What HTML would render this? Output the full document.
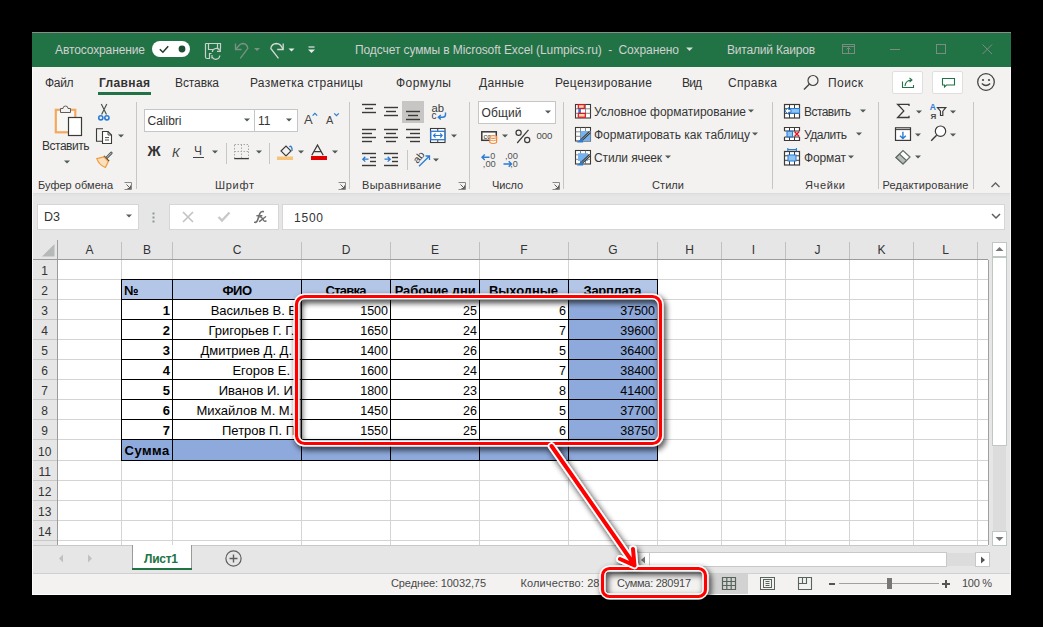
<!DOCTYPE html><html><head><meta charset="utf-8"><style>
html,body{margin:0;padding:0;background:#000;width:1043px;height:627px;overflow:hidden;position:relative;font-family:"Liberation Sans",sans-serif}
svg{display:block}
</style></head><body>
<div style="position:absolute;left:32px;top:32px;width:979px;height:563px;background:#f3f2f1;"></div>
<div style="position:absolute;left:32px;top:32px;width:979px;height:1px;background:#8c8c8c;"></div>
<div style="position:absolute;left:32px;top:33px;width:979px;height:34px;background:#217346;"></div>
<div style="position:absolute;top:43.84px;font-size:12px;line-height:12px;color:#d2d0d0;white-space:nowrap;letter-spacing:-0.114px;left:55.00px;">Автосохранение</div>
<div style="position:absolute;left:152px;top:41px;width:38px;height:16px;border-radius:8px;background:#fff"></div>
<svg style="position:absolute;left:0;top:0" width="1043" height="627" viewBox="0 0 1043 627"><path d="M159.8 49.3 L162.9 52.2 L168.2 46.3" stroke="#1d3b2a" stroke-width="1.5" fill="none"/><circle cx="182" cy="49" r="3.4" fill="#1d4f33"/></svg>
<svg style="position:absolute;left:0;top:0" width="1043" height="627" viewBox="0 0 1043 627"><g stroke="#c9d1cc" stroke-width="1.2" fill="none"><path d="M205.5 43.5 H220.5 V48.5"/><path d="M205.5 43.5 V57 Q205.5 58.5 207 58.5 H210"/><path d="M208.5 43.5 V49.5 H213.5"/><path d="M217.5 43.5 V48.5"/><path d="M209.5 58.5 V53.5 H211.5"/><path d="M212.3 52 A4 4 0 0 1 219.8 50.5"/><path d="M220.3 48 V51.3 H217"/><path d="M219.8 55.5 A4 4 0 0 1 212.2 57"/><path d="M212 55 V58.5"/></g><g stroke="#7d9283" stroke-width="1.3" fill="none"><path d="M235.5 43.5 V49.5 H241.5"/><path d="M235.7 49.2 L239.5 45 Q241 43.5 243 43.5 Q247 43.7 247.8 48.3 L240.3 58.3"/></g><path d="M254 48 H260 L257 51Z" fill="#7d9283"/><g stroke="#d5d9d6" stroke-width="1.3" fill="none"><path d="M283.2 43.5 V49.5 H277.2"/><path d="M283 49.2 Q280.5 43.5 276.5 43.5 Q271.5 43.7 270.8 48.5 L278.5 58.3"/></g><path d="M288.5 48.5 H294.5 L291.5 51.5Z" fill="#e8ebe9"/><path d="M308.5 47 H314.5" stroke="#e8ebe9" stroke-width="1.2"/><path d="M308 49.5 H315 L311.5 53Z" fill="#e8ebe9"/></svg>
<div style="position:absolute;top:43.84px;font-size:12px;line-height:12px;color:#d2d0d0;white-space:nowrap;letter-spacing:-0.091px;left:355.00px;">Подсчет суммы в Microsoft Excel (Lumpics.ru)  -  Сохранено</div>
<svg style="position:absolute;left:686px;top:47px;" width="7" height="5" viewBox="0 0 7 5"><path d="M0 0.5 H7 L3.5 4Z" fill="#d3dcd6"/></svg>
<div style="position:absolute;top:43.84px;font-size:12px;line-height:12px;color:#d2d0d0;white-space:nowrap;letter-spacing:-0.198px;left:727.00px;">Виталий Каиров</div>
<svg style="position:absolute;left:0;top:0" width="1043" height="627" viewBox="0 0 1043 627"><g stroke="#7b8d80" stroke-width="1" fill="none"><rect x="842.5" y="44.5" width="12" height="9"/><path d="M842.5 46.5 H854.5 M848.5 48 V53.5 M846.5 49.5 L848.5 47.5 L850.5 49.5"/><path d="M890 49.5 H900"/><rect x="936.5" y="44.5" width="9" height="9"/><path d="M982.5 44.5 L992 54 M992 44.5 L982.5 54"/></g></svg>
<div style="position:absolute;top:76.84px;font-size:12px;line-height:12px;color:#303030;white-space:nowrap;letter-spacing:-0.334px;left:45.00px;">Файл</div>
<div style="position:absolute;top:76.84px;font-size:12px;line-height:12px;color:#333;white-space:nowrap;font-weight:bold;letter-spacing:0.366px;left:99.00px;">Главная</div>
<div style="position:absolute;left:98px;top:92px;width:53px;height:3px;background:#217346;"></div>
<div style="position:absolute;top:76.84px;font-size:12px;line-height:12px;color:#303030;white-space:nowrap;letter-spacing:-0.101px;left:175.00px;">Вставка</div>
<div style="position:absolute;top:76.84px;font-size:12px;line-height:12px;color:#303030;white-space:nowrap;letter-spacing:0.258px;left:250.00px;">Разметка страницы</div>
<div style="position:absolute;top:76.84px;font-size:12px;line-height:12px;color:#303030;white-space:nowrap;letter-spacing:0.463px;left:396.00px;">Формулы</div>
<div style="position:absolute;top:76.84px;font-size:12px;line-height:12px;color:#303030;white-space:nowrap;letter-spacing:0.329px;left:479.00px;">Данные</div>
<div style="position:absolute;top:76.84px;font-size:12px;line-height:12px;color:#303030;white-space:nowrap;letter-spacing:0.333px;left:555.00px;">Рецензирование</div>
<div style="position:absolute;top:76.84px;font-size:12px;line-height:12px;color:#303030;white-space:nowrap;letter-spacing:-0.855px;left:682.00px;">Вид</div>
<div style="position:absolute;top:76.84px;font-size:12px;line-height:12px;color:#303030;white-space:nowrap;letter-spacing:0.321px;left:728.00px;">Справка</div>
<svg style="position:absolute;left:802px;top:74px;" width="18" height="18" viewBox="0 0 18 18"><circle cx="11" cy="6.5" r="5" stroke="#444" stroke-width="1.2" fill="none"/><path d="M7.5 10 L2 15.5" stroke="#444" stroke-width="1.4"/></svg>
<div style="position:absolute;top:76.84px;font-size:12px;line-height:12px;color:#303030;white-space:nowrap;letter-spacing:0.437px;left:828.00px;">Поиск</div>
<div style="position:absolute;left:892px;top:71px;width:31px;height:23px;background:#fff;border:1px solid #e1dfdd;box-sizing:border-box;border-radius:2px"></div>
<svg style="position:absolute;left:0;top:0" width="1043" height="627" viewBox="0 0 1043 627"><path d="M902.5 81.5 V87.5 H913.5 V85" stroke="#217346" stroke-width="1.1" fill="none"/><path d="M905 86 Q905.5 80.5 911.5 80 M909.5 77.8 L912 80 L909.5 82.2" stroke="#217346" stroke-width="1.1" fill="none"/></svg>
<div style="position:absolute;left:932px;top:71px;width:31px;height:23px;background:#fff;border:1px solid #e1dfdd;box-sizing:border-box;border-radius:2px"></div>
<svg style="position:absolute;left:0;top:0" width="1043" height="627" viewBox="0 0 1043 627"><path d="M942.5 78.5 H954.5 V85 H946.5 L944.5 87 V85 H942.5Z" stroke="#217346" stroke-width="1.1" fill="none"/></svg>
<svg style="position:absolute;left:976px;top:72px;" width="20" height="20" viewBox="0 0 20 20"><circle cx="10" cy="10" r="8.3" stroke="#444" stroke-width="1.3" fill="none"/><circle cx="7" cy="8" r="1.1" fill="#444"/><circle cx="13" cy="8" r="1.1" fill="#444"/><path d="M5.8 11.5 Q10 15.5 14.2 11.5" stroke="#444" stroke-width="1.2" fill="none"/></svg>
<div style="position:absolute;left:32px;top:193px;width:979px;height:1px;background:#dcdcdc;"></div>
<div style="position:absolute;left:32px;top:194px;width:979px;height:2px;background:#e3e3e3;"></div>
<svg style="position:absolute;left:52px;top:103px;" width="34" height="34" viewBox="0 0 34 34"><rect x="3.8" y="6.8" width="19.5" height="22.5" fill="#f9f7f5" stroke="#f4a85e" stroke-width="2.2"/><path d="M8.5 9.5 V5.5 H11 a2.5 2.5 0 0 1 5 0 H18.5 V9.5Z" fill="#f3f2f1" stroke="#605e5c" stroke-width="1"/><rect x="16.5" y="14.5" width="13" height="18" fill="#fff" stroke="#3b3a39" stroke-width="1.2"/></svg>
<div style="position:absolute;top:139.84px;font-size:12px;line-height:12px;color:#363636;white-space:nowrap;letter-spacing:-0.481px;left:42.00px;">Вставить</div>
<svg style="position:absolute;left:63.5px;top:159.5px;" width="6" height="4" viewBox="0 0 6 4"><path d="M0 0.5 H6 L3 3.5Z" fill="#4f5b54"/></svg>
<svg style="position:absolute;left:0;top:0" width="1043" height="627" viewBox="0 0 1043 627"><path d="M101.3 104 L106.5 114.5 M106.8 104 L101.6 114.5" stroke="#4b5650" stroke-width="1.2" fill="none"/><circle cx="100.8" cy="117.8" r="2.1" stroke="#2b7cd3" stroke-width="1.6" fill="none"/><circle cx="106.9" cy="117.8" r="2.1" stroke="#2b7cd3" stroke-width="1.6" fill="none"/><path d="M103 128.8 H96.5 V141.3 H102" stroke="#3b3a39" stroke-width="1.1" fill="none"/><path d="M102.5 131.5 H108 L111.5 135 V143.5 H102.5Z" stroke="#3b3a39" stroke-width="1.1" fill="#fff"/><path d="M108 131.5 V135 H111.5" stroke="#3b3a39" stroke-width="0.9" fill="none"/><path d="M105 137.6 H109 M105 140 H109" stroke="#3b3a39" stroke-width="0.9"/><path d="M111.3 153 L106.8 157.6" stroke="#4b5650" stroke-width="2.6" stroke-linecap="round"/><path d="M111.3 153 L106.8 157.6" stroke="#f3f2f1" stroke-width="0.8" stroke-linecap="round"/><path d="M103.8 156 L109 161.2" stroke="#3b3a39" stroke-width="1.6"/><path d="M96.8 158.6 L104 156.8 L108.3 161.5 L105.4 167.5 Q99 165 96.8 158.6Z" fill="#fbe0bd" stroke="#f09a3c" stroke-width="1.2"/></svg>
<svg style="position:absolute;left:117.5px;top:134px;" width="6" height="4" viewBox="0 0 6 4"><path d="M0 0.5 H6 L3 3.5Z" fill="#4f5b54"/></svg>
<div style="position:absolute;top:179.69px;font-size:11px;line-height:11px;color:#363636;white-space:nowrap;letter-spacing:0.023px;left:38.00px;">Буфер обмена</div>
<svg style="position:absolute;left:124px;top:182px;" width="8" height="8" viewBox="0 0 8 8"><path d="M0.5 0.5 H7.5 V7.5 H0.5" stroke="#8a8886" fill="none"/><path d="M2.5 2.5 L6.5 6.5 M6.5 3.5 V6.5 H3.5" stroke="#605e5c" fill="none"/></svg>
<div style="position:absolute;left:136px;top:102px;width:1px;height:87px;background:#c8c6c4;"></div>
<div style="position:absolute;left:144px;top:109px;width:111px;height:23px;background:#fff;border:1px solid #c6c6c6;box-sizing:border-box"></div>
<div style="position:absolute;left:254px;top:109px;width:44px;height:23px;background:#fff;border:1px solid #c6c6c6;box-sizing:border-box"></div>
<div style="position:absolute;top:114.84px;font-size:12px;line-height:12px;color:#333;white-space:nowrap;letter-spacing:-0.002px;left:147.50px;">Calibri</div>
<svg style="position:absolute;left:244px;top:118px;" width="6" height="4" viewBox="0 0 6 4"><path d="M0 0.5 H6 L3 3.5Z" fill="#4f5b54"/></svg>
<div style="position:absolute;top:114.84px;font-size:12px;line-height:12px;color:#333;white-space:nowrap;left:258.00px;">11</div>
<svg style="position:absolute;left:286px;top:118px;" width="6" height="4" viewBox="0 0 6 4"><path d="M0 0.5 H6 L3 3.5Z" fill="#4f5b54"/></svg>
<div style="position:absolute;top:113.00px;font-size:13px;line-height:13px;color:#444;white-space:nowrap;left:304.00px;">A</div>
<svg style="position:absolute;left:0;top:0" width="1043" height="627" viewBox="0 0 1043 627"><path d="M312.6 115.6 L314.9 113.3 L317.2 115.6" stroke="#2b7cd3" stroke-width="1.2" fill="none"/></svg>
<div style="position:absolute;top:114.69px;font-size:11px;line-height:11px;color:#444;white-space:nowrap;left:326.00px;">A</div>
<svg style="position:absolute;left:0;top:0" width="1043" height="627" viewBox="0 0 1043 627"><path d="M334.2 113.3 L336.5 115.6 L338.8 113.3" stroke="#2b7cd3" stroke-width="1.2" fill="none"/></svg>
<div style="position:absolute;top:144.03px;font-size:14.5px;line-height:14.5px;color:#333;white-space:nowrap;font-weight:bold;left:147.50px;">Ж</div>
<div style="position:absolute;top:146.00px;font-size:13px;line-height:13px;color:#444;white-space:nowrap;left:172.00px;font-style:italic;">К</div>
<div style="position:absolute;top:144.84px;font-size:12px;line-height:12px;color:#444;white-space:nowrap;left:194.00px;">Ч</div>
<div style="position:absolute;left:193px;top:157px;width:11px;height:1px;background:#444;"></div>
<svg style="position:absolute;left:212px;top:150px;" width="6" height="4" viewBox="0 0 6 4"><path d="M0 0.5 H6 L3 3.5Z" fill="#4f5b54"/></svg>
<div style="position:absolute;left:226px;top:143px;width:1px;height:21px;background:#c8c6c4;"></div>
<svg style="position:absolute;left:0;top:0" width="1043" height="627" viewBox="0 0 1043 627"><g stroke="#a8a8a8" stroke-width="1" stroke-dasharray="1.5 1.5" fill="none"><rect x="234.5" y="144.5" width="14" height="14"/><path d="M241.5 144.5 V158.5 M234.5 151.5 H248.5"/></g><path d="M234.3 158.6 H248.8" stroke="#3b3a39" stroke-width="1.3"/></svg>
<svg style="position:absolute;left:255.5px;top:150px;" width="6" height="4" viewBox="0 0 6 4"><path d="M0 0.5 H6 L3 3.5Z" fill="#4f5b54"/></svg>
<div style="position:absolute;left:269px;top:143px;width:1px;height:21px;background:#c8c6c4;"></div>
<svg style="position:absolute;left:277px;top:143px;" width="17" height="18" viewBox="0 0 17 18"><path d="M4 8 L9 3 L14 8 L9 13Z" stroke="#3b3a39" stroke-width="1.1" fill="none"/><path d="M12.5 4 Q14 2 15 5.5 V8" stroke="#2b7cd3" stroke-width="1.3" fill="none"/><rect x="0" y="13.5" width="16" height="3.5" fill="#f7c27a"/></svg>
<svg style="position:absolute;left:298px;top:150px;" width="6" height="4" viewBox="0 0 6 4"><path d="M0 0.5 H6 L3 3.5Z" fill="#4f5b54"/></svg>
<svg style="position:absolute;left:0;top:0" width="1043" height="627" viewBox="0 0 1043 627"><path d="M311.8 155.2 L317.5 145 L323.2 155.2 M313.8 151.6 H321.2" stroke="#3b3a39" stroke-width="1.3" fill="none"/></svg>
<div style="position:absolute;left:311px;top:156px;width:16px;height:4px;background:#e00000;"></div>
<svg style="position:absolute;left:332px;top:150px;" width="6" height="4" viewBox="0 0 6 4"><path d="M0 0.5 H6 L3 3.5Z" fill="#4f5b54"/></svg>
<div style="position:absolute;top:179.69px;font-size:11px;line-height:11px;color:#363636;white-space:nowrap;letter-spacing:0.702px;left:215.00px;">Шрифт</div>
<svg style="position:absolute;left:338px;top:182px;" width="8" height="8" viewBox="0 0 8 8"><path d="M0.5 0.5 H7.5 V7.5 H0.5" stroke="#8a8886" fill="none"/><path d="M2.5 2.5 L6.5 6.5 M6.5 3.5 V6.5 H3.5" stroke="#605e5c" fill="none"/></svg>
<div style="position:absolute;left:349px;top:102px;width:1px;height:87px;background:#c8c6c4;"></div>
<div style="position:absolute;left:402px;top:101px;width:22px;height:22px;background:#c8c6c4;"></div>
<svg style="position:absolute;left:0;top:0" width="1043" height="627" viewBox="0 0 1043 627"><rect x="362" y="103.8" width="14" height="1.4" fill="#3b3a39"/><rect x="365" y="107.8" width="8" height="1.4" fill="#3b3a39"/><rect x="362" y="111.8" width="14" height="1.4" fill="#3b3a39"/><rect x="384" y="106.8" width="14" height="1.4" fill="#3b3a39"/><rect x="386" y="110.8" width="10" height="1.4" fill="#3b3a39"/><rect x="384" y="114.8" width="14" height="1.4" fill="#3b3a39"/><rect x="406" y="110.8" width="14" height="1.4" fill="#3b3a39"/><rect x="408" y="114.8" width="10" height="1.4" fill="#3b3a39"/><rect x="406" y="118.8" width="14" height="1.4" fill="#3b3a39"/><rect x="362" y="128.8" width="14" height="1.4" fill="#3b3a39"/><rect x="362" y="132.8" width="10" height="1.4" fill="#3b3a39"/><rect x="362" y="136.8" width="14" height="1.4" fill="#3b3a39"/><rect x="362" y="140.8" width="10" height="1.4" fill="#3b3a39"/><rect x="384" y="128.8" width="14" height="1.4" fill="#3b3a39"/><rect x="386" y="132.8" width="10" height="1.4" fill="#3b3a39"/><rect x="384" y="136.8" width="14" height="1.4" fill="#3b3a39"/><rect x="386" y="140.8" width="10" height="1.4" fill="#3b3a39"/><rect x="406" y="128.8" width="14" height="1.4" fill="#3b3a39"/><rect x="410" y="132.8" width="10" height="1.4" fill="#3b3a39"/><rect x="406" y="136.8" width="14" height="1.4" fill="#3b3a39"/><rect x="410" y="140.8" width="10" height="1.4" fill="#3b3a39"/></svg>
<svg style="position:absolute;left:0;top:0" width="1043" height="627" viewBox="0 0 1043 627"><text x="431.6" y="111.8" font-size="10" fill="#3b3a39" font-family="Liberation Sans" textLength="12.5" lengthAdjust="spacingAndGlyphs">ab</text><text x="431.6" y="119.4" font-size="10" fill="#3b3a39" font-family="Liberation Sans">c</text><path d="M445.5 112.5 V114.5 Q445.5 117.3 442.5 117.3 H438.5 M440.8 115 L438.3 117.3 L440.8 119.6" stroke="#2b7cd3" stroke-width="1.4" fill="none"/></svg>
<svg style="position:absolute;left:0;top:0" width="1043" height="627" viewBox="0 0 1043 627"><rect x="430.5" y="128.5" width="14.5" height="14" stroke="#3b3a39" stroke-width="1.1" fill="#fff"/><path d="M437.75 128.5 V131.5 M437.75 139.5 V142.5" stroke="#3b3a39" stroke-width="1"/><rect x="430.8" y="131.3" width="14" height="8.4" stroke="#2b7cd3" stroke-width="1.3" fill="#fff"/><path d="M433.5 135.5 H442.2 M435.5 133.5 L433.5 135.5 L435.5 137.5 M440.2 133.5 L442.2 135.5 L440.2 137.5" stroke="#2b7cd3" stroke-width="1.1" fill="none"/></svg>
<svg style="position:absolute;left:451px;top:134px;" width="6" height="4" viewBox="0 0 6 4"><path d="M0 0.5 H6 L3 3.5Z" fill="#4f5b54"/></svg>
<svg style="position:absolute;left:0;top:0" width="1043" height="627" viewBox="0 0 1043 627"><rect x="362" y="152.8" width="14" height="1.4" fill="#3b3a39"/><rect x="370" y="156.8" width="6" height="1.4" fill="#3b3a39"/><rect x="370" y="160.8" width="6" height="1.4" fill="#3b3a39"/><rect x="362" y="164.8" width="14" height="1.4" fill="#3b3a39"/><rect x="384" y="152.8" width="14" height="1.4" fill="#3b3a39"/><rect x="392" y="156.8" width="6" height="1.4" fill="#3b3a39"/><rect x="392" y="160.8" width="6" height="1.4" fill="#3b3a39"/><rect x="384" y="164.8" width="14" height="1.4" fill="#3b3a39"/><path d="M368.5 159.2 H362.8 M365.3 156.8 L362.8 159.2 L365.3 161.6" stroke="#2b7cd3" stroke-width="1.3" fill="none"/><path d="M384.5 159.2 H390.2 M387.7 156.8 L390.2 159.2 L387.7 161.6" stroke="#2b7cd3" stroke-width="1.3" fill="none"/></svg>
<div style="position:absolute;left:407px;top:150px;width:1px;height:20px;background:#c8c6c4;"></div>
<svg style="position:absolute;left:0;top:0" width="1043" height="627" viewBox="0 0 1043 627"><text x="0" y="0" font-size="10" fill="#3b3a39" font-family="Liberation Sans" transform="translate(417.5 164) rotate(-50)" textLength="12" lengthAdjust="spacingAndGlyphs">ab</text><path d="M419 166.3 L429.5 156 M425.5 156 H429.5 V160" stroke="#2b7cd3" stroke-width="1.3" fill="none"/></svg>
<svg style="position:absolute;left:433px;top:158px;" width="6" height="4" viewBox="0 0 6 4"><path d="M0 0.5 H6 L3 3.5Z" fill="#4f5b54"/></svg>
<div style="position:absolute;top:179.69px;font-size:11px;line-height:11px;color:#363636;white-space:nowrap;letter-spacing:0.298px;left:362.00px;">Выравнивание</div>
<svg style="position:absolute;left:458px;top:182px;" width="8" height="8" viewBox="0 0 8 8"><path d="M0.5 0.5 H7.5 V7.5 H0.5" stroke="#8a8886" fill="none"/><path d="M2.5 2.5 L6.5 6.5 M6.5 3.5 V6.5 H3.5" stroke="#605e5c" fill="none"/></svg>
<div style="position:absolute;left:469px;top:102px;width:1px;height:87px;background:#c8c6c4;"></div>
<div style="position:absolute;left:478px;top:101px;width:78px;height:23px;background:#fff;border:1px solid #c6c6c6;box-sizing:border-box"></div>
<div style="position:absolute;top:106.84px;font-size:12px;line-height:12px;color:#333;white-space:nowrap;letter-spacing:0.128px;left:481.50px;">Общий</div>
<svg style="position:absolute;left:545px;top:110px;" width="6" height="4" viewBox="0 0 6 4"><path d="M0 0.5 H6 L3 3.5Z" fill="#4f5b54"/></svg>
<svg style="position:absolute;left:0;top:0" width="1043" height="627" viewBox="0 0 1043 627"><rect x="481.8" y="131.8" width="14.5" height="8.5" stroke="#3b3a39" stroke-width="1.5" fill="#fff"/><text x="483.5" y="139" font-size="7.5" fill="#3b3a39" font-family="Liberation Sans">cc</text><path d="M489.8 137 V142.5 Q493.2 144.5 496.6 142.5 V137Z" fill="#fff" stroke="#ee8a3a" stroke-width="1.1"/><ellipse cx="493.2" cy="137" rx="3.4" ry="1.4" fill="#fff" stroke="#ee8a3a" stroke-width="1.1"/><path d="M490 140 Q493.2 141.6 496.4 140" stroke="#ee8a3a" stroke-width="0.9" fill="none"/><circle cx="518.6" cy="132.8" r="2.6" stroke="#3b3a39" stroke-width="1.2" fill="none"/><circle cx="527.2" cy="140" r="2.6" stroke="#3b3a39" stroke-width="1.2" fill="none"/><path d="M528.5 129.8 L517.2 143" stroke="#3b3a39" stroke-width="1.2"/><text x="536.4" y="139.2" font-size="9.3" fill="#4a4a4a" font-family="Liberation Sans" textLength="16" lengthAdjust="spacingAndGlyphs">000</text><path d="M489.5 157.2 H482 M484.8 154.4 L482 157.2 L484.8 160" stroke="#2b7cd3" stroke-width="1.4" fill="none"/><text x="490.3" y="159.3" font-size="9" fill="#555" font-family="Liberation Sans">0</text><text x="482.8" y="166.6" font-size="9" fill="#555" font-family="Liberation Sans" textLength="13" lengthAdjust="spacingAndGlyphs">,00</text><text x="505" y="159.3" font-size="9" fill="#555" font-family="Liberation Sans" textLength="13" lengthAdjust="spacingAndGlyphs">,00</text><path d="M503.5 164 H511.5 M508.7 161.2 L511.5 164 L508.7 166.8" stroke="#2b7cd3" stroke-width="1.4" fill="none"/><text x="510.2" y="166.6" font-size="9" fill="#555" font-family="Liberation Sans">,0</text></svg>
<svg style="position:absolute;left:502px;top:134px;" width="6" height="4" viewBox="0 0 6 4"><path d="M0 0.5 H6 L3 3.5Z" fill="#4f5b54"/></svg>
<div style="position:absolute;top:179.69px;font-size:11px;line-height:11px;color:#363636;white-space:nowrap;letter-spacing:-0.159px;left:492.00px;">Число</div>
<svg style="position:absolute;left:552px;top:182px;" width="8" height="8" viewBox="0 0 8 8"><path d="M0.5 0.5 H7.5 V7.5 H0.5" stroke="#8a8886" fill="none"/><path d="M2.5 2.5 L6.5 6.5 M6.5 3.5 V6.5 H3.5" stroke="#605e5c" fill="none"/></svg>
<div style="position:absolute;left:563px;top:102px;width:1px;height:87px;background:#c8c6c4;"></div>
<svg style="position:absolute;left:0;top:0" width="1043" height="627" viewBox="0 0 1043 627"><rect x="575.5" y="104.5" width="15" height="13.5" stroke="#3b3a39" stroke-width="1.1" fill="#fff"/><path d="M575.5 108.8 H590.5 M575.5 113.3 H590.5 M580.5 104.5 V118.0 M585.5 104.5 V118.0" stroke="#6b6a69" stroke-width="0.8"/><rect x="578.3" y="104.6" width="6" height="3.8" fill="#f3d9a8" stroke="#e81123" stroke-width="1.2"/><rect x="578.3" y="108.8" width="2.5" height="4.2" fill="#2b7cd3"/><rect x="578.3" y="113.4" width="7" height="3.8" fill="#f3d9a8" stroke="#e81123" stroke-width="1.2"/></svg>
<div style="position:absolute;top:105.84px;font-size:12px;line-height:12px;color:#363636;white-space:nowrap;letter-spacing:-0.030px;left:594.00px;">Условное форматирование</div>
<svg style="position:absolute;left:748px;top:109px;" width="6" height="4" viewBox="0 0 6 4"><path d="M0 0.5 H6 L3 3.5Z" fill="#4f5b54"/></svg>
<svg style="position:absolute;left:0;top:0" width="1043" height="627" viewBox="0 0 1043 627"><rect x="575.5" y="127.5" width="15" height="13.5" stroke="#3b3a39" stroke-width="1.1" fill="#fff"/><path d="M575.5 131.8 H590.5 M575.5 136.3 H590.5 M580.5 127.5 V141.0 M585.5 127.5 V141.0" stroke="#6b6a69" stroke-width="0.8"/><rect x="580.6" y="131" width="10" height="10" fill="#75b3f0"/><path d="M590 132 L581 140.5" stroke="#3b3a39" stroke-width="2.6"/><path d="M590 132 L581 140.5" stroke="#9a9a9a" stroke-width="1"/><path d="M582 139 L578.5 141.8 L582.5 141.8Z" fill="#2b7cd3" stroke="#2b7cd3" stroke-width="1.2"/></svg>
<div style="position:absolute;top:128.84px;font-size:12px;line-height:12px;color:#363636;white-space:nowrap;letter-spacing:-0.006px;left:594.00px;">Форматировать как таблицу</div>
<svg style="position:absolute;left:752px;top:132px;" width="6" height="4" viewBox="0 0 6 4"><path d="M0 0.5 H6 L3 3.5Z" fill="#4f5b54"/></svg>
<svg style="position:absolute;left:0;top:0" width="1043" height="627" viewBox="0 0 1043 627"><rect x="575.5" y="150.5" width="15" height="13.5" stroke="#3b3a39" stroke-width="1.1" fill="#fff"/><path d="M575.5 154.8 H590.5 M575.5 159.3 H590.5 M580.5 150.5 V164.0 M585.5 150.5 V164.0" stroke="#6b6a69" stroke-width="0.8"/><rect x="578" y="153.2" width="10" height="7.8" fill="#75b3f0"/><path d="M590 155 L581 163.5" stroke="#3b3a39" stroke-width="2.6"/><path d="M590 155 L581 163.5" stroke="#9a9a9a" stroke-width="1"/><path d="M582 162 L578.5 164.8 L582.5 164.8Z" fill="#2b7cd3" stroke="#2b7cd3" stroke-width="1.2"/></svg>
<div style="position:absolute;top:151.84px;font-size:12px;line-height:12px;color:#363636;white-space:nowrap;letter-spacing:-0.125px;left:594.00px;">Стили ячеек</div>
<svg style="position:absolute;left:664.5px;top:155px;" width="6" height="4" viewBox="0 0 6 4"><path d="M0 0.5 H6 L3 3.5Z" fill="#4f5b54"/></svg>
<div style="position:absolute;top:179.69px;font-size:11px;line-height:11px;color:#363636;white-space:nowrap;letter-spacing:0.078px;left:652.00px;">Стили</div>
<div style="position:absolute;left:772px;top:102px;width:1px;height:87px;background:#c8c6c4;"></div>
<svg style="position:absolute;left:0;top:0" width="1043" height="627" viewBox="0 0 1043 627"><rect x="784.5" y="104.5" width="15" height="13.5" stroke="#3b3a39" stroke-width="1.2" fill="#fff"/><path d="M784.5 108.8 H799.5 M784.5 113.3 H799.5 M789.5 104.5 V118.0 M794.5 104.5 V118.0" stroke="#3b3a39" stroke-width="1"/><rect x="790.3" y="108.6" width="9.2" height="4.6" fill="#8cc4f5" stroke="#2b7cd3" stroke-width="1"/><path d="M791 109.6 H788.5 V107.5 L784.8 110.9 L788.5 114.3 V112.2 H791Z" fill="#fff" stroke="#2b7cd3" stroke-width="1"/></svg>
<div style="position:absolute;top:105.84px;font-size:12px;line-height:12px;color:#363636;white-space:nowrap;letter-spacing:-0.552px;left:804.00px;">Вставить</div>
<svg style="position:absolute;left:860px;top:109px;" width="6" height="4" viewBox="0 0 6 4"><path d="M0 0.5 H6 L3 3.5Z" fill="#4f5b54"/></svg>
<svg style="position:absolute;left:0;top:0" width="1043" height="627" viewBox="0 0 1043 627"><path d="M784.5 131 V127.5 H799.5 V131 M784.5 137 V140.5 H799.5 V137" stroke="#3b3a39" stroke-width="1.2" fill="#fff"/><path d="M789.5 127.5 V131 M794.5 127.5 V131 M789.5 137 V140.5 M794.5 137 V140.5 M784.5 131 H799.5 M784.5 137 H799.5" stroke="#3b3a39" stroke-width="1"/><rect x="787" y="131.3" width="5.5" height="5.5" fill="#8cc4f5" stroke="#2b7cd3" stroke-width="1.1"/><path d="M794.5 131.5 L799.2 136.5 M799.2 131.5 L794.5 136.5" stroke="#e81123" stroke-width="1.3"/></svg>
<div style="position:absolute;top:128.84px;font-size:12px;line-height:12px;color:#363636;white-space:nowrap;letter-spacing:-0.469px;left:804.00px;">Удалить</div>
<svg style="position:absolute;left:856px;top:132px;" width="6" height="4" viewBox="0 0 6 4"><path d="M0 0.5 H6 L3 3.5Z" fill="#4f5b54"/></svg>
<svg style="position:absolute;left:0;top:0" width="1043" height="627" viewBox="0 0 1043 627"><rect x="784.5" y="151.5" width="15" height="13.5" stroke="#3b3a39" stroke-width="1.2" fill="#fff"/><path d="M784.5 155.8 H799.5 M784.5 160.3 H799.5 M789.5 151.5 V165.0 M794.5 151.5 V165.0" stroke="#3b3a39" stroke-width="1"/><rect x="788" y="155" width="8" height="6" fill="#8cc4f5" stroke="#2b7cd3" stroke-width="1"/><path d="M787.8 149.6 H796.4 M787.8 148 V151.2 M796.4 148 V151.2" stroke="#2b7cd3" stroke-width="1.1"/></svg>
<div style="position:absolute;top:151.84px;font-size:12px;line-height:12px;color:#363636;white-space:nowrap;letter-spacing:-0.126px;left:804.00px;">Формат</div>
<svg style="position:absolute;left:848px;top:155px;" width="6" height="4" viewBox="0 0 6 4"><path d="M0 0.5 H6 L3 3.5Z" fill="#4f5b54"/></svg>
<div style="position:absolute;top:179.69px;font-size:11px;line-height:11px;color:#363636;white-space:nowrap;letter-spacing:0.621px;left:805.00px;">Ячейки</div>
<div style="position:absolute;left:878px;top:102px;width:1px;height:87px;background:#c8c6c4;"></div>
<svg style="position:absolute;left:0;top:0" width="1043" height="627" viewBox="0 0 1043 627"><path d="M909 106 V104.3 H897.6 L903.8 110.9 L897.6 117.5 H909 V115.8" stroke="#3b3a39" stroke-width="1.3" fill="none"/><text x="929.8" y="109.6" font-size="8.5" font-weight="bold" fill="#2b7cd3" font-family="Liberation Sans">A</text><text x="930.6" y="118.8" font-size="8" font-weight="bold" fill="#4a4a4a" font-family="Liberation Sans">Я</text><path d="M937.5 107.6 H945.8 L942.8 111.2 V115.5 H940.5 V111.2Z" stroke="#3b3a39" stroke-width="1.2" fill="#fff"/><rect x="895.5" y="127.8" width="15" height="12.6" stroke="#3b3a39" stroke-width="1.2" fill="#fff"/><path d="M895.5 129.6 H910.5" stroke="#3b3a39" stroke-width="1"/><path d="M902.9 131.8 V138.6 M900 135.8 L902.9 138.6 L905.8 135.8" stroke="#2b7cd3" stroke-width="1.4" fill="none"/><circle cx="940.5" cy="131.2" r="5.2" stroke="#3b3a39" stroke-width="1.2" fill="#fff"/><path d="M936.6 135.2 L931.2 140.8" stroke="#3b3a39" stroke-width="1.4"/><path d="M896 157.5 L903 150.5 L910 157 L903 164Z" fill="#fff" stroke="#5f6f66" stroke-width="1.2"/><path d="M896 157.5 L899.5 154 L906.5 160.5 L903 164Z" fill="#b9bcb9" stroke="#5f6f66" stroke-width="1.2"/></svg>
<svg style="position:absolute;left:916px;top:109.5px;" width="6" height="4" viewBox="0 0 6 4"><path d="M0 0.5 H6 L3 3.5Z" fill="#4f5b54"/></svg>
<svg style="position:absolute;left:949.5px;top:109.5px;" width="6" height="4" viewBox="0 0 6 4"><path d="M0 0.5 H6 L3 3.5Z" fill="#4f5b54"/></svg>
<svg style="position:absolute;left:914.6px;top:132.5px;" width="6" height="4" viewBox="0 0 6 4"><path d="M0 0.5 H6 L3 3.5Z" fill="#4f5b54"/></svg>
<svg style="position:absolute;left:949.5px;top:132.5px;" width="6" height="4" viewBox="0 0 6 4"><path d="M0 0.5 H6 L3 3.5Z" fill="#4f5b54"/></svg>
<svg style="position:absolute;left:914.6px;top:155.4px;" width="6" height="4" viewBox="0 0 6 4"><path d="M0 0.5 H6 L3 3.5Z" fill="#4f5b54"/></svg>
<div style="position:absolute;top:179.69px;font-size:11px;line-height:11px;color:#363636;white-space:nowrap;letter-spacing:0.169px;left:882.50px;">Редактирование</div>
<div style="position:absolute;left:973px;top:102px;width:1px;height:87px;background:#c8c6c4;"></div>
<svg style="position:absolute;left:991px;top:182px;" width="9" height="6" viewBox="0 0 9 6"><path d="M0.5 5 L4.5 1 L8.5 5" stroke="#605e5c" stroke-width="1.3" fill="none"/></svg>
<div style="position:absolute;left:32px;top:196px;width:979px;height:349px;background:#e6e6e6;"></div>
<div style="position:absolute;left:37px;top:204px;width:102px;height:26px;background:#fff;border:1px solid #d6d6d6;box-sizing:border-box"></div>
<div style="position:absolute;top:211.42px;font-size:12.5px;line-height:12.5px;color:#333;white-space:nowrap;left:44.00px;">D3</div>
<svg style="position:absolute;left:125.5px;top:214px;" width="6" height="4" viewBox="0 0 6 4"><path d="M0 0.5 H6 L3 3.5Z" fill="#605e5c"/></svg>
<svg style="position:absolute;left:152px;top:212px;" width="4" height="11" viewBox="0 0 4 11"><rect x="0.5" y="0.5" width="2" height="2" fill="#8a9a94"/><rect x="0.5" y="4.5" width="2" height="2" fill="#8a9a94"/><rect x="0.5" y="8.5" width="2" height="2" fill="#8a9a94"/></svg>
<div style="position:absolute;left:169px;top:204px;width:110px;height:26px;background:#fff;border:1px solid #d6d6d6;box-sizing:border-box"></div>
<svg style="position:absolute;left:182px;top:211px;" width="12" height="12" viewBox="0 0 12 12"><path d="M1 1 L11 11 M11 1 L1 11" stroke="#c4c4c4" stroke-width="1.7"/></svg>
<svg style="position:absolute;left:217px;top:211px;" width="14" height="12" viewBox="0 0 14 12"><path d="M1.5 6 L5 9.5 L12.5 1.5" stroke="#c8c8c8" stroke-width="2.3" fill="none"/></svg>
<svg style="position:absolute;left:0;top:0" width="1043" height="627" viewBox="0 0 1043 627"><g stroke="#707070" stroke-width="1.6" fill="none" stroke-linecap="round"><path d="M254.8 222.3 Q256.8 222.8 257.8 219.5 L259.8 213.6 Q260.8 211 263.3 211.6"/><path d="M257 215.8 H261.8"/><path d="M259.8 217 Q261 216.4 262 218 L263.8 220.6 Q264.6 221.6 266 221" stroke-width="1.4"/><path d="M265.6 216.8 L259.6 221.4" stroke-width="1.4"/></g></svg>
<div style="position:absolute;left:282px;top:204px;width:723px;height:26px;background:#fff;border:1px solid #d6d6d6;box-sizing:border-box"></div>
<div style="position:absolute;top:211.84px;font-size:12px;line-height:12px;color:#333;white-space:nowrap;letter-spacing:0.768px;left:294.00px;">1500</div>
<svg style="position:absolute;left:991px;top:213px;" width="10" height="7" viewBox="0 0 10 7"><path d="M1 1 L5 5 L9 1" stroke="#605e5c" stroke-width="1.5" fill="none"/></svg>
<div style="position:absolute;left:58px;top:260px;width:930px;height:285px;background:#fff;"></div>
<div style="position:absolute;left:33px;top:240px;width:955px;height:19px;background:#e6e6e6;"></div>
<div style="position:absolute;left:33px;top:259px;width:955px;height:1px;background:#9b9b9b;"></div>
<div style="position:absolute;left:33px;top:260px;width:24px;height:285px;background:#e6e6e6;"></div>
<div style="position:absolute;left:57px;top:240px;width:1px;height:305px;background:#9b9b9b;"></div>
<svg style="position:absolute;left:42px;top:244px;" width="13" height="13" viewBox="0 0 13 13"><path d="M12.5 0 V12.5 H0Z" fill="#b5b9b7"/></svg>
<div style="position:absolute;left:121px;top:242px;width:1px;height:17px;background:#c0c0c0;"></div>
<div style="position:absolute;left:172px;top:242px;width:1px;height:17px;background:#c0c0c0;"></div>
<div style="position:absolute;left:301px;top:242px;width:1px;height:17px;background:#c0c0c0;"></div>
<div style="position:absolute;left:390px;top:242px;width:1px;height:17px;background:#c0c0c0;"></div>
<div style="position:absolute;left:479px;top:242px;width:1px;height:17px;background:#c0c0c0;"></div>
<div style="position:absolute;left:568px;top:242px;width:1px;height:17px;background:#c0c0c0;"></div>
<div style="position:absolute;left:657px;top:242px;width:1px;height:17px;background:#c0c0c0;"></div>
<div style="position:absolute;left:721px;top:242px;width:1px;height:17px;background:#c0c0c0;"></div>
<div style="position:absolute;left:785px;top:242px;width:1px;height:17px;background:#c0c0c0;"></div>
<div style="position:absolute;left:849px;top:242px;width:1px;height:17px;background:#c0c0c0;"></div>
<div style="position:absolute;left:913px;top:242px;width:1px;height:17px;background:#c0c0c0;"></div>
<div style="position:absolute;left:977px;top:242px;width:1px;height:17px;background:#c0c0c0;"></div>
<div style="position:absolute;top:244.04px;font-size:12px;line-height:12px;color:#333;white-space:nowrap;left:85.50px;">A</div>
<div style="position:absolute;top:244.04px;font-size:12px;line-height:12px;color:#333;white-space:nowrap;left:143.00px;">B</div>
<div style="position:absolute;top:244.04px;font-size:12px;line-height:12px;color:#333;white-space:nowrap;left:232.67px;">C</div>
<div style="position:absolute;top:244.04px;font-size:12px;line-height:12px;color:#333;white-space:nowrap;left:341.67px;">D</div>
<div style="position:absolute;top:244.04px;font-size:12px;line-height:12px;color:#333;white-space:nowrap;left:431.00px;">E</div>
<div style="position:absolute;top:244.04px;font-size:12px;line-height:12px;color:#333;white-space:nowrap;left:520.33px;">F</div>
<div style="position:absolute;top:244.04px;font-size:12px;line-height:12px;color:#333;white-space:nowrap;left:608.33px;">G</div>
<div style="position:absolute;top:244.04px;font-size:12px;line-height:12px;color:#333;white-space:nowrap;left:685.17px;">H</div>
<div style="position:absolute;top:244.04px;font-size:12px;line-height:12px;color:#333;white-space:nowrap;left:751.83px;">I</div>
<div style="position:absolute;top:244.04px;font-size:12px;line-height:12px;color:#333;white-space:nowrap;left:814.50px;">J</div>
<div style="position:absolute;top:244.04px;font-size:12px;line-height:12px;color:#333;white-space:nowrap;left:877.50px;">K</div>
<div style="position:absolute;top:244.04px;font-size:12px;line-height:12px;color:#333;white-space:nowrap;left:942.16px;">L</div>
<div style="position:absolute;left:121px;top:260px;width:1px;height:285px;background:#d4d4d4;"></div>
<div style="position:absolute;left:172px;top:260px;width:1px;height:285px;background:#d4d4d4;"></div>
<div style="position:absolute;left:301px;top:260px;width:1px;height:285px;background:#d4d4d4;"></div>
<div style="position:absolute;left:390px;top:260px;width:1px;height:285px;background:#d4d4d4;"></div>
<div style="position:absolute;left:479px;top:260px;width:1px;height:285px;background:#d4d4d4;"></div>
<div style="position:absolute;left:568px;top:260px;width:1px;height:285px;background:#d4d4d4;"></div>
<div style="position:absolute;left:657px;top:260px;width:1px;height:285px;background:#d4d4d4;"></div>
<div style="position:absolute;left:721px;top:260px;width:1px;height:285px;background:#d4d4d4;"></div>
<div style="position:absolute;left:785px;top:260px;width:1px;height:285px;background:#d4d4d4;"></div>
<div style="position:absolute;left:849px;top:260px;width:1px;height:285px;background:#d4d4d4;"></div>
<div style="position:absolute;left:913px;top:260px;width:1px;height:285px;background:#d4d4d4;"></div>
<div style="position:absolute;left:977px;top:260px;width:1px;height:285px;background:#d4d4d4;"></div>
<div style="position:absolute;left:58px;top:279px;width:930px;height:1px;background:#d4d4d4;"></div>
<div style="position:absolute;left:33px;top:279px;width:24px;height:1px;background:#c8c8c8;"></div>
<div style="position:absolute;top:264.84px;font-size:12px;line-height:12px;color:#333;white-space:nowrap;left:41.36px;">1</div>
<div style="position:absolute;left:58px;top:299px;width:930px;height:1px;background:#d4d4d4;"></div>
<div style="position:absolute;left:33px;top:299px;width:24px;height:1px;background:#c8c8c8;"></div>
<div style="position:absolute;top:284.84px;font-size:12px;line-height:12px;color:#333;white-space:nowrap;left:41.36px;">2</div>
<div style="position:absolute;left:58px;top:319px;width:930px;height:1px;background:#d4d4d4;"></div>
<div style="position:absolute;left:33px;top:319px;width:24px;height:1px;background:#c8c8c8;"></div>
<div style="position:absolute;top:304.84px;font-size:12px;line-height:12px;color:#333;white-space:nowrap;left:41.36px;">3</div>
<div style="position:absolute;left:58px;top:339px;width:930px;height:1px;background:#d4d4d4;"></div>
<div style="position:absolute;left:33px;top:339px;width:24px;height:1px;background:#c8c8c8;"></div>
<div style="position:absolute;top:324.84px;font-size:12px;line-height:12px;color:#333;white-space:nowrap;left:41.36px;">4</div>
<div style="position:absolute;left:58px;top:359px;width:930px;height:1px;background:#d4d4d4;"></div>
<div style="position:absolute;left:33px;top:359px;width:24px;height:1px;background:#c8c8c8;"></div>
<div style="position:absolute;top:344.84px;font-size:12px;line-height:12px;color:#333;white-space:nowrap;left:41.36px;">5</div>
<div style="position:absolute;left:58px;top:379px;width:930px;height:1px;background:#d4d4d4;"></div>
<div style="position:absolute;left:33px;top:379px;width:24px;height:1px;background:#c8c8c8;"></div>
<div style="position:absolute;top:364.84px;font-size:12px;line-height:12px;color:#333;white-space:nowrap;left:41.36px;">6</div>
<div style="position:absolute;left:58px;top:399px;width:930px;height:1px;background:#d4d4d4;"></div>
<div style="position:absolute;left:33px;top:399px;width:24px;height:1px;background:#c8c8c8;"></div>
<div style="position:absolute;top:384.84px;font-size:12px;line-height:12px;color:#333;white-space:nowrap;left:41.36px;">7</div>
<div style="position:absolute;left:58px;top:419px;width:930px;height:1px;background:#d4d4d4;"></div>
<div style="position:absolute;left:33px;top:419px;width:24px;height:1px;background:#c8c8c8;"></div>
<div style="position:absolute;top:404.84px;font-size:12px;line-height:12px;color:#333;white-space:nowrap;left:41.36px;">8</div>
<div style="position:absolute;left:58px;top:439px;width:930px;height:1px;background:#d4d4d4;"></div>
<div style="position:absolute;left:33px;top:439px;width:24px;height:1px;background:#c8c8c8;"></div>
<div style="position:absolute;top:424.84px;font-size:12px;line-height:12px;color:#333;white-space:nowrap;left:41.36px;">9</div>
<div style="position:absolute;left:58px;top:460px;width:930px;height:1px;background:#d4d4d4;"></div>
<div style="position:absolute;left:33px;top:460px;width:24px;height:1px;background:#c8c8c8;"></div>
<div style="position:absolute;top:445.84px;font-size:12px;line-height:12px;color:#333;white-space:nowrap;left:38.03px;">10</div>
<div style="position:absolute;left:58px;top:480px;width:930px;height:1px;background:#d4d4d4;"></div>
<div style="position:absolute;left:33px;top:480px;width:24px;height:1px;background:#c8c8c8;"></div>
<div style="position:absolute;top:465.84px;font-size:12px;line-height:12px;color:#333;white-space:nowrap;left:38.47px;">11</div>
<div style="position:absolute;left:58px;top:500px;width:930px;height:1px;background:#d4d4d4;"></div>
<div style="position:absolute;left:33px;top:500px;width:24px;height:1px;background:#c8c8c8;"></div>
<div style="position:absolute;top:485.84px;font-size:12px;line-height:12px;color:#333;white-space:nowrap;left:38.03px;">12</div>
<div style="position:absolute;left:58px;top:520px;width:930px;height:1px;background:#d4d4d4;"></div>
<div style="position:absolute;left:33px;top:520px;width:24px;height:1px;background:#c8c8c8;"></div>
<div style="position:absolute;top:505.84px;font-size:12px;line-height:12px;color:#333;white-space:nowrap;left:38.03px;">13</div>
<div style="position:absolute;left:58px;top:540px;width:930px;height:1px;background:#d4d4d4;"></div>
<div style="position:absolute;left:33px;top:540px;width:24px;height:1px;background:#c8c8c8;"></div>
<div style="position:absolute;top:525.84px;font-size:12px;line-height:12px;color:#333;white-space:nowrap;left:38.03px;">14</div>
<div style="position:absolute;left:988px;top:260px;width:1px;height:285px;background:#a0a0a0;"></div>
<div style="position:absolute;left:122px;top:280px;width:535px;height:19px;background:#b4c6e7;"></div>
<div style="position:absolute;left:122px;top:440px;width:535px;height:20px;background:#8ea9db;"></div>
<div style="position:absolute;left:569px;top:300px;width:88px;height:139px;background:#8ea9db;"></div>
<div style="position:absolute;left:121px;top:279px;width:1px;height:182px;background:#000;"></div>
<div style="position:absolute;left:172px;top:279px;width:1px;height:182px;background:#000;"></div>
<div style="position:absolute;left:301px;top:279px;width:1px;height:182px;background:#000;"></div>
<div style="position:absolute;left:390px;top:279px;width:1px;height:182px;background:#000;"></div>
<div style="position:absolute;left:479px;top:279px;width:1px;height:182px;background:#000;"></div>
<div style="position:absolute;left:568px;top:279px;width:1px;height:182px;background:#000;"></div>
<div style="position:absolute;left:657px;top:279px;width:1px;height:182px;background:#000;"></div>
<div style="position:absolute;left:121px;top:279px;width:537px;height:1px;background:#000;"></div>
<div style="position:absolute;left:121px;top:299px;width:537px;height:1px;background:#000;"></div>
<div style="position:absolute;left:121px;top:319px;width:537px;height:1px;background:#000;"></div>
<div style="position:absolute;left:121px;top:339px;width:537px;height:1px;background:#000;"></div>
<div style="position:absolute;left:121px;top:359px;width:537px;height:1px;background:#000;"></div>
<div style="position:absolute;left:121px;top:379px;width:537px;height:1px;background:#000;"></div>
<div style="position:absolute;left:121px;top:399px;width:537px;height:1px;background:#000;"></div>
<div style="position:absolute;left:121px;top:419px;width:537px;height:1px;background:#000;"></div>
<div style="position:absolute;left:121px;top:439px;width:537px;height:1px;background:#000;"></div>
<div style="position:absolute;left:121px;top:460px;width:537px;height:1px;background:#000;"></div>
<div style="position:absolute;top:284.00px;font-size:13px;line-height:13px;color:#000;white-space:nowrap;font-weight:bold;left:124.00px;">№</div>
<div style="position:absolute;top:284.00px;font-size:13px;line-height:13px;color:#000;white-space:nowrap;font-weight:bold;letter-spacing:-0.526px;left:222.50px;">ФИО</div>
<div style="position:absolute;top:284.00px;font-size:13px;line-height:13px;color:#000;white-space:nowrap;font-weight:bold;letter-spacing:-0.742px;left:325.50px;">Ставка</div>
<div style="position:absolute;top:284.00px;font-size:13px;line-height:13px;color:#000;white-space:nowrap;font-weight:bold;letter-spacing:-0.085px;left:394.70px;">Рабочие дни</div>
<div style="position:absolute;top:284.00px;font-size:13px;line-height:13px;color:#000;white-space:nowrap;font-weight:bold;letter-spacing:-0.086px;left:489.00px;">Выходные</div>
<div style="position:absolute;top:284.00px;font-size:13px;line-height:13px;color:#000;white-space:nowrap;font-weight:bold;letter-spacing:-0.322px;left:583.60px;">Зарплата</div>
<div style="position:absolute;top:304.00px;font-size:13px;line-height:13px;color:#000;white-space:nowrap;font-weight:bold;left:162.77px;">1</div>
<div style="position:absolute;left:173px;top:300px;width:124px;height:19px;overflow:hidden">
<div style="position:absolute;top:4.00px;font-size:13px;line-height:13px;color:#000;white-space:nowrap;left:37.70px;">Васильев В. В.</div>
</div>
<div style="position:absolute;top:305.12px;font-size:12.5px;line-height:12.5px;color:#000;white-space:nowrap;left:360.19px;">1500</div>
<div style="position:absolute;top:305.12px;font-size:12.5px;line-height:12.5px;color:#000;white-space:nowrap;left:463.10px;">25</div>
<div style="position:absolute;top:305.12px;font-size:12.5px;line-height:12.5px;color:#000;white-space:nowrap;left:559.05px;">6</div>
<div style="position:absolute;top:305.12px;font-size:12.5px;line-height:12.5px;color:#000;white-space:nowrap;left:620.24px;">37500</div>
<div style="position:absolute;top:324.00px;font-size:13px;line-height:13px;color:#000;white-space:nowrap;font-weight:bold;left:162.77px;">2</div>
<div style="position:absolute;left:173px;top:320px;width:124px;height:19px;overflow:hidden">
<div style="position:absolute;top:4.00px;font-size:13px;line-height:13px;color:#000;white-space:nowrap;left:35.40px;">Григорьев Г. Г.</div>
</div>
<div style="position:absolute;top:325.12px;font-size:12.5px;line-height:12.5px;color:#000;white-space:nowrap;left:360.19px;">1650</div>
<div style="position:absolute;top:325.12px;font-size:12.5px;line-height:12.5px;color:#000;white-space:nowrap;left:463.10px;">24</div>
<div style="position:absolute;top:325.12px;font-size:12.5px;line-height:12.5px;color:#000;white-space:nowrap;left:559.05px;">7</div>
<div style="position:absolute;top:325.12px;font-size:12.5px;line-height:12.5px;color:#000;white-space:nowrap;left:620.24px;">39600</div>
<div style="position:absolute;top:344.00px;font-size:13px;line-height:13px;color:#000;white-space:nowrap;font-weight:bold;left:162.77px;">3</div>
<div style="position:absolute;left:173px;top:340px;width:124px;height:19px;overflow:hidden">
<div style="position:absolute;top:4.00px;font-size:13px;line-height:13px;color:#000;white-space:nowrap;left:27.40px;">Дмитриев Д. Д.</div>
</div>
<div style="position:absolute;top:345.12px;font-size:12.5px;line-height:12.5px;color:#000;white-space:nowrap;left:360.19px;">1400</div>
<div style="position:absolute;top:345.12px;font-size:12.5px;line-height:12.5px;color:#000;white-space:nowrap;left:463.10px;">26</div>
<div style="position:absolute;top:345.12px;font-size:12.5px;line-height:12.5px;color:#000;white-space:nowrap;left:559.05px;">5</div>
<div style="position:absolute;top:345.12px;font-size:12.5px;line-height:12.5px;color:#000;white-space:nowrap;left:620.24px;">36400</div>
<div style="position:absolute;top:364.00px;font-size:13px;line-height:13px;color:#000;white-space:nowrap;font-weight:bold;left:162.77px;">4</div>
<div style="position:absolute;left:173px;top:360px;width:124px;height:19px;overflow:hidden">
<div style="position:absolute;top:4.00px;font-size:13px;line-height:13px;color:#000;white-space:nowrap;left:59.40px;">Егоров Е. Е.</div>
</div>
<div style="position:absolute;top:365.12px;font-size:12.5px;line-height:12.5px;color:#000;white-space:nowrap;left:360.19px;">1600</div>
<div style="position:absolute;top:365.12px;font-size:12.5px;line-height:12.5px;color:#000;white-space:nowrap;left:463.10px;">24</div>
<div style="position:absolute;top:365.12px;font-size:12.5px;line-height:12.5px;color:#000;white-space:nowrap;left:559.05px;">7</div>
<div style="position:absolute;top:365.12px;font-size:12.5px;line-height:12.5px;color:#000;white-space:nowrap;left:620.24px;">38400</div>
<div style="position:absolute;top:384.00px;font-size:13px;line-height:13px;color:#000;white-space:nowrap;font-weight:bold;left:162.77px;">5</div>
<div style="position:absolute;left:173px;top:380px;width:124px;height:19px;overflow:hidden">
<div style="position:absolute;top:4.00px;font-size:13px;line-height:13px;color:#000;white-space:nowrap;left:45.70px;">Иванов И. И.</div>
</div>
<div style="position:absolute;top:385.12px;font-size:12.5px;line-height:12.5px;color:#000;white-space:nowrap;left:360.19px;">1800</div>
<div style="position:absolute;top:385.12px;font-size:12.5px;line-height:12.5px;color:#000;white-space:nowrap;left:463.10px;">23</div>
<div style="position:absolute;top:385.12px;font-size:12.5px;line-height:12.5px;color:#000;white-space:nowrap;left:559.05px;">8</div>
<div style="position:absolute;top:385.12px;font-size:12.5px;line-height:12.5px;color:#000;white-space:nowrap;left:620.24px;">41400</div>
<div style="position:absolute;top:404.00px;font-size:13px;line-height:13px;color:#000;white-space:nowrap;font-weight:bold;left:162.77px;">6</div>
<div style="position:absolute;left:173px;top:400px;width:124px;height:19px;overflow:hidden">
<div style="position:absolute;top:4.00px;font-size:13px;line-height:13px;color:#000;white-space:nowrap;left:23.40px;">Михайлов М. М.</div>
</div>
<div style="position:absolute;top:405.12px;font-size:12.5px;line-height:12.5px;color:#000;white-space:nowrap;left:360.19px;">1450</div>
<div style="position:absolute;top:405.12px;font-size:12.5px;line-height:12.5px;color:#000;white-space:nowrap;left:463.10px;">26</div>
<div style="position:absolute;top:405.12px;font-size:12.5px;line-height:12.5px;color:#000;white-space:nowrap;left:559.05px;">5</div>
<div style="position:absolute;top:405.12px;font-size:12.5px;line-height:12.5px;color:#000;white-space:nowrap;left:620.24px;">37700</div>
<div style="position:absolute;top:424.00px;font-size:13px;line-height:13px;color:#000;white-space:nowrap;font-weight:bold;left:162.77px;">7</div>
<div style="position:absolute;left:173px;top:420px;width:124px;height:19px;overflow:hidden">
<div style="position:absolute;top:4.00px;font-size:13px;line-height:13px;color:#000;white-space:nowrap;left:49.00px;">Петров П. П.</div>
</div>
<div style="position:absolute;top:425.12px;font-size:12.5px;line-height:12.5px;color:#000;white-space:nowrap;left:360.19px;">1550</div>
<div style="position:absolute;top:425.12px;font-size:12.5px;line-height:12.5px;color:#000;white-space:nowrap;left:463.10px;">25</div>
<div style="position:absolute;top:425.12px;font-size:12.5px;line-height:12.5px;color:#000;white-space:nowrap;left:559.05px;">6</div>
<div style="position:absolute;top:425.12px;font-size:12.5px;line-height:12.5px;color:#000;white-space:nowrap;left:620.24px;">38750</div>
<div style="position:absolute;top:444.00px;font-size:13px;line-height:13px;color:#000;white-space:nowrap;font-weight:bold;letter-spacing:0.465px;left:124.60px;">Сумма</div>
<div style="position:absolute;left:33px;top:545px;width:955px;height:1px;background:#c8c8c8;"></div>
<div style="position:absolute;left:33px;top:546px;width:977px;height:27px;background:#e6e6e6;"></div>
<svg style="position:absolute;left:58px;top:554px;" width="6" height="9" viewBox="0 0 6 9"><path d="M5 0.5 V8.5 L1 4.5Z" fill="#c0c0c0"/></svg>
<svg style="position:absolute;left:87px;top:554px;" width="6" height="9" viewBox="0 0 6 9"><path d="M1 0.5 V8.5 L5 4.5Z" fill="#c0c0c0"/></svg>
<div style="position:absolute;left:132px;top:545px;width:60px;height:25px;background:#fff;border-left:1px solid #9a9a9a;border-right:1px solid #9a9a9a;box-sizing:border-box"></div>
<div style="position:absolute;left:132px;top:568px;width:60px;height:2px;background:#217346;"></div>
<div style="position:absolute;top:552.84px;font-size:12px;line-height:12px;color:#217346;white-space:nowrap;font-weight:bold;letter-spacing:-0.256px;left:144.00px;">Лист1</div>
<svg style="position:absolute;left:225px;top:550px;" width="17" height="17" viewBox="0 0 17 17"><circle cx="8.5" cy="8.5" r="7.6" stroke="#605e5c" stroke-width="1.2" fill="none"/><path d="M8.5 4.5 V12.5 M4.5 8.5 H12.5" stroke="#605e5c" stroke-width="1.4"/></svg>
<div style="position:absolute;left:636px;top:552px;width:14px;height:15px;background:#fff;border:1px solid #c8c8c8;box-sizing:border-box"></div>
<svg style="position:absolute;left:640px;top:556px;" width="6" height="8" viewBox="0 0 6 8"><path d="M5 0.5 V7.5 L1 4Z" fill="#777"/></svg>
<div style="position:absolute;left:649px;top:552px;width:298px;height:15px;background:#fff;border:1px solid #c8c8c8;box-sizing:border-box"></div>
<div style="position:absolute;left:947px;top:553px;width:28px;height:13px;background:#dcdcdc;"></div>
<div style="position:absolute;left:975px;top:552px;width:15px;height:15px;background:#fff;border:1px solid #c8c8c8;box-sizing:border-box"></div>
<svg style="position:absolute;left:980px;top:556px;" width="6" height="8" viewBox="0 0 6 8"><path d="M1 0.5 V7.5 L5 4Z" fill="#555"/></svg>
<div style="position:absolute;left:989px;top:240px;width:21px;height:306px;background:#e6e6e6;"></div>
<div style="position:absolute;left:992px;top:242px;width:15px;height:15px;background:#fff;border:1px solid #c0c8c4;box-sizing:border-box"></div>
<svg style="position:absolute;left:995px;top:246px;" width="9" height="6" viewBox="0 0 9 6"><path d="M0.5 5 L4.5 1 L8.5 5Z" fill="#777"/></svg>
<div style="position:absolute;left:992px;top:257px;width:15px;height:189px;background:#fff;border:1px solid #c0c8c4;box-sizing:border-box"></div>
<div style="position:absolute;left:993px;top:446px;width:13px;height:85px;background:#dcdcdc;"></div>
<div style="position:absolute;left:992px;top:531px;width:15px;height:15px;background:#fff;border:1px solid #c0c8c4;box-sizing:border-box"></div>
<svg style="position:absolute;left:995px;top:536px;" width="9" height="6" viewBox="0 0 9 6"><path d="M0.5 1 L4.5 5 L8.5 1Z" fill="#777"/></svg>
<div style="position:absolute;left:1010px;top:196px;width:1px;height:399px;background:#f4f4f4;"></div>
<div style="position:absolute;left:32px;top:573px;width:979px;height:1px;background:#d0d0d0;"></div>
<div style="position:absolute;left:32px;top:574px;width:979px;height:21px;background:#f3f2f1;"></div>
<div style="position:absolute;top:577.69px;font-size:11px;line-height:11px;color:#484848;white-space:nowrap;letter-spacing:-0.104px;left:391.00px;">Среднее: 10032,75</div>
<div style="position:absolute;top:577.69px;font-size:11px;line-height:11px;color:#484848;white-space:nowrap;letter-spacing:0.121px;left:520.50px;">Количество: 28</div>
<div style="position:absolute;top:577.69px;font-size:11px;line-height:11px;color:#484848;white-space:nowrap;letter-spacing:-0.282px;left:617.00px;">Сумма: 280917</div>
<div style="position:absolute;left:710px;top:574px;width:38px;height:20px;background:#d2d2d2;"></div>
<svg style="position:absolute;left:0;top:0" width="1043" height="627" viewBox="0 0 1043 627"><path d="M722.5 577.5 H735.5 V589.5 H722.5Z M722.5 581.5 H735.5 M722.5 585.5 H735.5 M726.8 577.5 V589.5 M731.2 577.5 V589.5" stroke="#56645b" stroke-width="1.2" fill="none"/></svg>
<svg style="position:absolute;left:760px;top:577px;" width="15" height="13" viewBox="0 0 15 13"><rect x="0.5" y="0.5" width="14" height="12" stroke="#56645b" fill="none"/><rect x="3.5" y="2.5" width="8" height="8" stroke="#56645b" fill="none"/><path d="M5.5 4.5 H9.5 M5.5 6.5 H9.5 M5.5 8.5 H9.5" stroke="#56645b"/></svg>
<svg style="position:absolute;left:0;top:0" width="1043" height="627" viewBox="0 0 1043 627"><path d="M798.5 577.5 H811.5 V589.5 H798.5Z M798.5 583.5 H806.5 V577.5 M802.5 577.5 V583.5" stroke="#56645b" stroke-width="1.1" fill="none"/></svg>
<div style="position:absolute;left:829px;top:583px;width:6px;height:2px;background:#555;"></div>
<div style="position:absolute;left:839px;top:583px;width:100px;height:1px;background:#a0a0a0;"></div>
<div style="position:absolute;left:887px;top:578px;width:5px;height:11px;background:#777;"></div>
<div style="position:absolute;left:942px;top:583px;width:8px;height:2px;background:#555;"></div>
<div style="position:absolute;left:945px;top:580px;width:2px;height:8px;background:#555;"></div>
<div style="position:absolute;top:577.69px;font-size:11px;line-height:11px;color:#484848;white-space:nowrap;letter-spacing:-0.298px;left:962.00px;">100 %</div>
<div style="position:absolute;left:32px;top:594px;width:979px;height:1px;background:#fdfdfd;"></div>
<div style="position:absolute;left:32px;top:67px;width:1px;height:528px;background:#fbfbfb;"></div>
<div style="position:absolute;left:1010px;top:67px;width:1px;height:528px;background:#f8f8f8;"></div>
<svg style="position:absolute;left:0;top:0" width="1043" height="627" viewBox="0 0 1043 627">
<defs>
<filter id="sh" x="-20%" y="-20%" width="140%" height="140%"><feGaussianBlur in="SourceAlpha" stdDeviation="3"/><feOffset dx="2" dy="3"/><feComponentTransfer><feFuncA type="linear" slope="0.85"/></feComponentTransfer><feMerge><feMergeNode/><feMergeNode in="SourceGraphic"/></feMerge></filter>
<filter id="inner" x="-5%" y="-5%" width="110%" height="110%"><feGaussianBlur stdDeviation="2.5"/></filter><filter id="inner2" x="-10%" y="-20%" width="120%" height="140%"><feGaussianBlur stdDeviation="1.5"/></filter>
<clipPath id="c1"><rect x="298" y="298" width="361" height="144" rx="6"/></clipPath>
<clipPath id="c2"><rect x="604" y="570" width="100" height="25" rx="5"/></clipPath>
</defs>
<g clip-path="url(#c1)"><rect x="293" y="293" width="371" height="154" rx="8" fill="none" stroke="#7a7a7a" stroke-width="7" filter="url(#inner)" transform="translate(2,2)" opacity="0.8"/></g>
<g clip-path="url(#c2)"><rect x="600" y="566" width="108" height="33" rx="8" fill="none" stroke="#8a8a8a" stroke-width="5" filter="url(#inner2)" transform="translate(2,2)" opacity="0.6"/></g>
<g filter="url(#sh)">
<rect x="296.5" y="296.5" width="364" height="147" rx="8" fill="none" stroke="#fff" stroke-width="6"/>
<rect x="296.5" y="296.5" width="364" height="147" rx="8" fill="none" stroke="#f00" stroke-width="3.2"/>
<rect x="602.5" y="568.5" width="103" height="28" rx="7" fill="none" stroke="#fff" stroke-width="6"/>
<rect x="602.5" y="568.5" width="103" height="28" rx="7" fill="none" stroke="#f00" stroke-width="3.2"/>
<path d="M551.5 446 L634.5 565 M620 559 L634.5 565.5 L633 549" fill="none" stroke="#fff" stroke-width="7.5" stroke-linecap="round" stroke-linejoin="round"/>
<path d="M551.5 446 L634.5 565 M620 559 L634.5 565.5 L633 549" fill="none" stroke="#f00" stroke-width="4" stroke-linecap="round" stroke-linejoin="round"/>
</g>
</svg>
</body></html>
